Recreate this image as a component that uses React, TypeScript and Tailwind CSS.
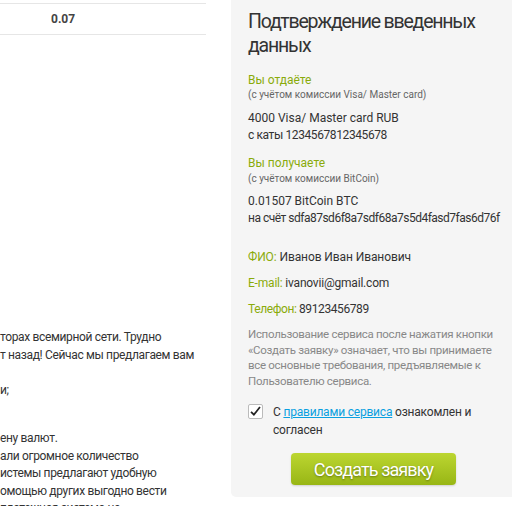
export default function App() {
  return (
    <div
      className="flex h-[506px] w-[512px] overflow-hidden bg-white text-[#333]"
      style={{ fontFamily: "Roboto, 'Noto Sans', sans-serif" }}
    >
      <div className="w-[231px] shrink-0">
        <div className="mr-[25px] mt-[3px] flex h-[32px] items-center border-y border-[#e6e6e6]">
          <span className="pl-[51px] text-[12px] font-bold text-[#444]">0.07</span>
        </div>
        <div className="mt-[294px] whitespace-nowrap text-[12px] leading-[17.5px] tracking-[-0.35px] text-[#333]">
          <div>торах всемирной сети. Трудно</div>
          <div>т назад! Сейчас мы предлагаем вам</div>
          <div className="h-[17.5px]" />
          <div>и;</div>
          <div className="h-[31px]" />
          <div>ену валют.</div>
          <div>али огромное количество</div>
          <div>истемы предлагают удобную</div>
          <div>омощью других выгодно вести</div>
          <div>платежная система не</div>
        </div>
      </div>

      <div className="flex h-[497px] flex-1 flex-col rounded-bl-[5px] bg-[#f5f5f5] pl-[17px] pr-[8px] pt-[10px]">
        <h2 className="text-[19.5px] leading-[24px] tracking-[-1.2px] text-[#333]">
          Подтверждение введенных данных
        </h2>

        <div className="mt-[14px] text-[12px] leading-[16px] text-[#8aab0a]">Вы отдаёте</div>
        <div className="text-[10px] leading-[14px] text-[#666]">(с учётом комиссии Visa/ Master card)</div>
        <div className="mt-[8px] text-[12px] leading-[17px]">
          <div>4000 Visa/ Master card RUB</div>
          <div className="tracking-[-0.4px]">с каты 1234567812345678</div>
        </div>

        <div className="mt-[11px] text-[12px] leading-[16px] text-[#8aab0a]">Вы получаете</div>
        <div className="text-[10px] leading-[15px] text-[#666]">(с учётом комиссии BitCoin)</div>
        <div className="mt-[7px] whitespace-nowrap text-[12px] leading-[17px]">
          <div>0.01507 BitCoin BTC</div>
          <div className="tracking-[-0.5px]">на счёт sdfa87sd6f8a7sdf68a7s5d4fasd7fas6d76f</div>
        </div>

        <div className="mt-[22px] text-[12px] leading-[16px] tracking-[-0.1px]">
          <span className="text-[#8aab0a]">ФИО:</span> Иванов Иван Иванович
        </div>
        <div className="mt-[10px] text-[12px] leading-[16px] tracking-[-0.2px]">
          <span className="text-[#8aab0a]">E-mail:</span> ivanovii@gmail.com
        </div>
        <div className="mt-[10px] text-[12px] leading-[16px] tracking-[-0.4px]">
          <span className="text-[#8aab0a]">Телефон:</span> 89123456789
        </div>

        <p className="mt-[10px] text-[11.5px] leading-[15.5px] tracking-[-0.3px] text-[#888]">
          Использование сервиса после нажатия кнопки «Создать заявку» означает, что вы принимаете все основные
          требования, предъявляемые к Пользователю сервиса.
        </p>

        <div className="mt-[14px] flex items-start gap-[10px]">
          <div className="mt-[1px] flex h-[15px] w-[15px] shrink-0 items-center justify-center rounded-[2px] border border-[#bbb] bg-white">
            <svg viewBox="0 0 16 16" className="h-[13px] w-[13px]">
              <path d="M2.5 8.5 L6 12 L13.5 2.5" fill="none" stroke="#222" strokeWidth="2.2" />
            </svg>
          </div>
          <div className="pr-[20px] text-[12px] leading-[18px] tracking-[-0.2px]">
            С{" "}
            <a href="#" className="text-[#0aa0e0] underline">
              правилами сервиса
            </a>{" "}
            ознакомлен и согласен
          </div>
        </div>

        <div className="mt-[14px] flex justify-center pr-[5px]">
          <button
            type="button"
            className="h-[32px] w-[165px] rounded-[4px] bg-gradient-to-b from-[#bcd630] to-[#98b614] text-[18px] tracking-[-0.9px] text-white shadow-[0_1px_2px_rgba(0,0,0,0.15)] [text-shadow:0_1px_2px_rgba(0,0,0,0.35)]"
          >
            Создать заявку
          </button>
        </div>
      </div>
    </div>
  );
}
